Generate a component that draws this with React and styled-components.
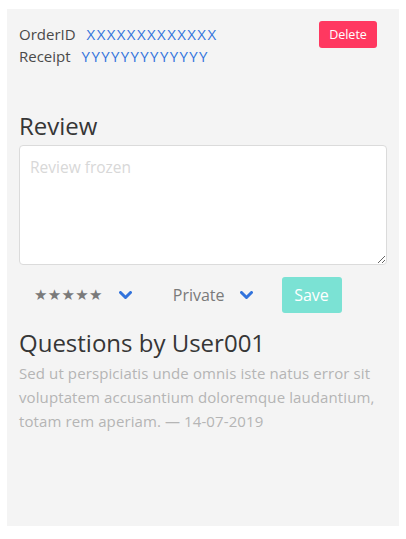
import styled, { createGlobalStyle } from "styled-components";

const GlobalStyle = createGlobalStyle`
  html, body {
    margin: 0;
    padding: 0;
    background: #ffffff;
    font-family: "Open Sans", "Noto Sans", sans-serif;
  }
  * { box-sizing: border-box; }
`;

const Panel = styled.div`
  margin: 9px 7px 0 7px;
  width: 392px;
  height: 517px;
  background: #f4f4f4;
  padding: 12px 22px 12px 12px;
  color: #4a4a4a;
`;

const Header = styled.div`
  display: flex;
  justify-content: space-between;
  align-items: flex-start;
`;

const Ids = styled.div`
  display: flex;
  flex-direction: column;
  padding-top: 2px;
`;

const IdRow = styled.div`
  display: flex;
  gap: 11px;
  font-size: 15px;
  line-height: 22px;
`;

const Label = styled.span`
  color: #4a4a4a;
`;

const Value = styled.span`
  color: #3273dc;
  letter-spacing: 1.4px;
`;

const Button = styled.button`
  border: none;
  border-radius: 3px;
  font-family: inherit;
  color: #ffffff;
  background: ${(p) => p.$bg};
  font-size: ${(p) => (p.$small ? "12.5px" : "16px")};
  width: ${(p) => (p.$small ? "58px" : "60px")};
  height: ${(p) => (p.$small ? "27px" : "36px")};
  padding: 0;
  margin-left: ${(p) => p.$ml || "0"};
`;

const Heading = styled.h2`
  margin: ${(p) => p.$top} 0 0 0;
  font-weight: 400;
  font-size: 24px;
  line-height: 28px;
  color: #363636;
`;

const TextArea = styled.textarea`
  display: block;
  width: 368px;
  height: 120px;
  margin-top: 5px;
  border: 1px solid #dbdbdb;
  border-radius: 4px;
  padding: 10px 10px;
  font-family: inherit;
  font-size: 15.5px;
  background: #ffffff;
  &::placeholder {
    color: #d8d8d8;
  }
`;

const Controls = styled.div`
  display: flex;
  align-items: center;
  margin-top: 12px;
  height: 36px;
`;

const Select = styled.div`
  display: flex;
  align-items: center;
  gap: ${(p) => p.$gap};
  margin-left: ${(p) => p.$ml};
  color: #7a7a7a;
  font-size: 16px;
`;

const Stars = styled.span`
  font-family: "DejaVu Sans", sans-serif;
  font-size: 15px;
  letter-spacing: 0.3px;
  color: #7a7a7a;
`;

const Paragraph = styled.p`
  margin: 4px 0 0 0;
  font-size: 15px;
  letter-spacing: 0.1px;
  line-height: 24px;
  color: #b5b5b5;
`;

function Chevron() {
  return (
    <svg width="13" height="9" viewBox="0 0 13 9">
      <polyline
        points="1.5,1.5 6.5,6.5 11.5,1.5"
        fill="none"
        stroke="#3273dc"
        strokeWidth="3"
        strokeLinecap="round"
        strokeLinejoin="round"
      />
    </svg>
  );
}

export default function App() {
  return (
    <>
      <GlobalStyle />
      <Panel>
        <Header>
          <Ids>
            <IdRow>
              <Label>OrderID</Label>
              <Value>XXXXXXXXXXXXX</Value>
            </IdRow>
            <IdRow>
              <Label>Receipt</Label>
              <Value>YYYYYYYYYYYYY</Value>
            </IdRow>
          </Ids>
          <Button $small $bg="#ff3860">Delete</Button>
        </Header>
        <Heading $top="45px">Review</Heading>
        <TextArea placeholder="Review frozen" />
        <Controls>
          <Select $gap="16px" $ml="15px">
            <Stars>★★★★★</Stars>
            <Chevron />
          </Select>
          <Select $gap="15px" $ml="41px">
            <span>Private</span>
            <Chevron />
          </Select>
          <Button $bg="#7be2d4" $ml="29px">Save</Button>
        </Controls>
        <Heading $top="16px">Questions by User001</Heading>
        <Paragraph>
          Sed ut perspiciatis unde omnis iste natus error sit voluptatem
          accusantium doloremque laudantium, totam rem aperiam. — 14-07-2019
        </Paragraph>
      </Panel>
    </>
  );
}
